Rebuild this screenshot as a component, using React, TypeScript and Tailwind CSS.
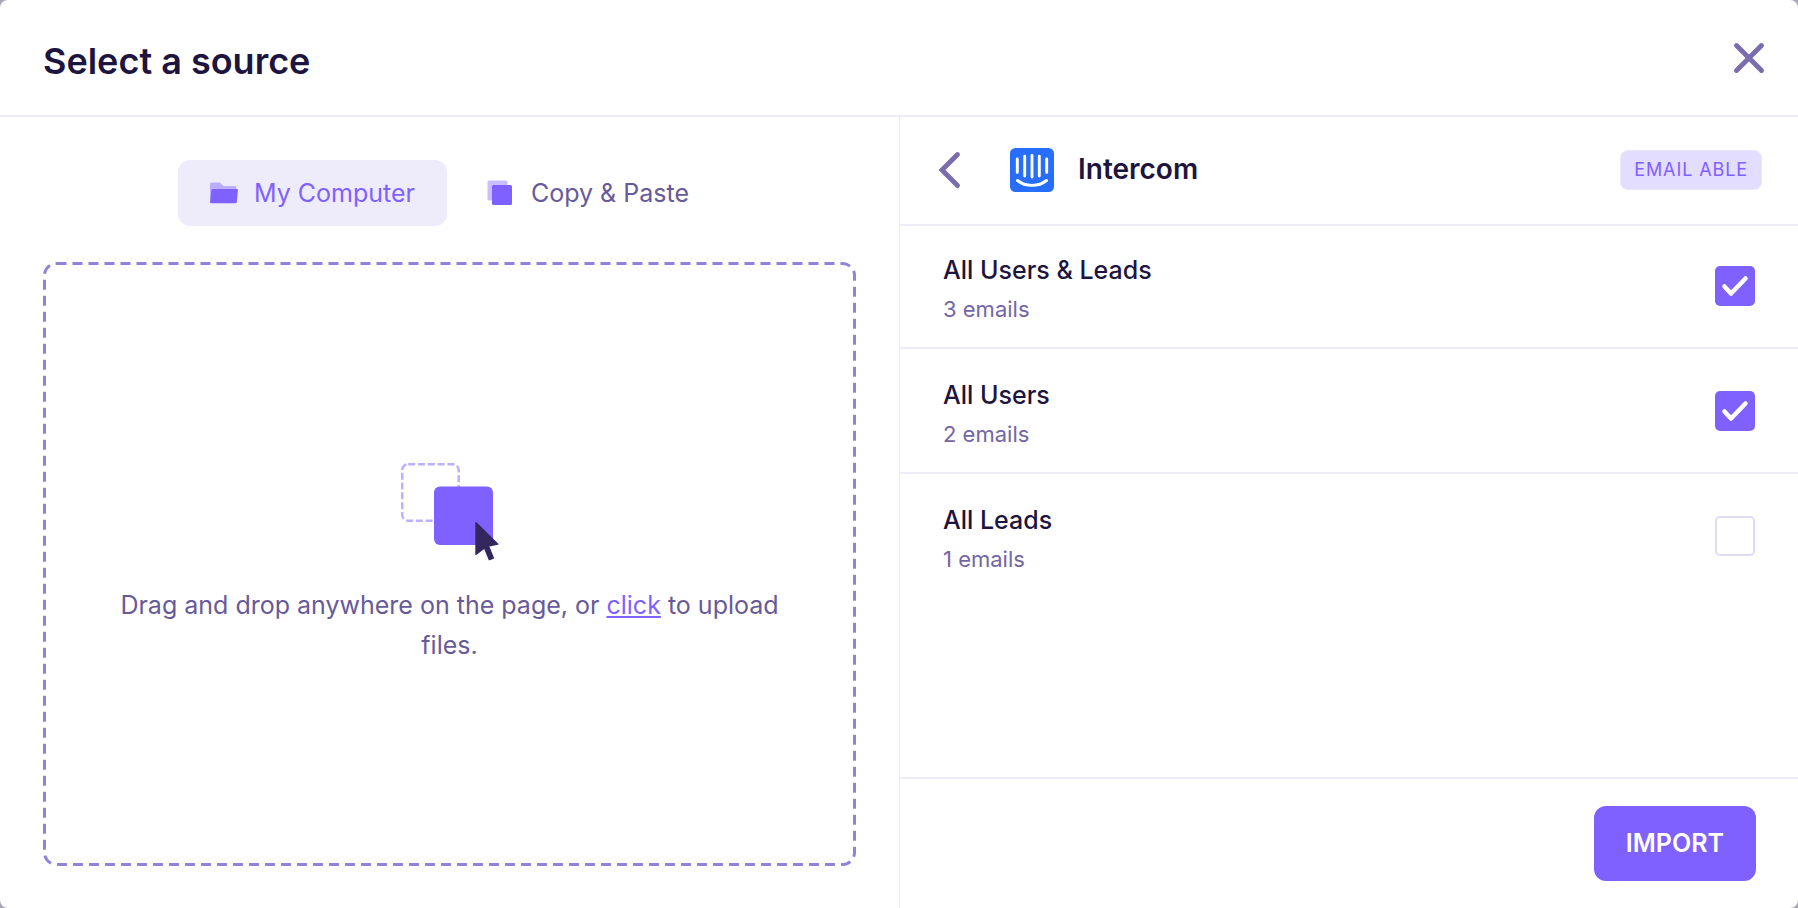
import { useState } from "react";

interface Segment {
    id: string;
    name: string;
    emails: number;
}

const segments: Segment[] = [
    { id: "all", name: "All Users & Leads", emails: 3 },
    { id: "users", name: "All Users", emails: 2 },
    { id: "leads", name: "All Leads", emails: 1 },
];

function FolderIcon() {
    return (
        <svg width="28" height="22" viewBox="0 0 28 22" aria-hidden="true">
            <path d="M0 21V2a1.500 1.500 0 0 1 1.500-1.500H10L13.500 4H25a1.500 1.500 0 0 1 1.500 1.500V10L4 21Z" fill="#bbaeff" />
            <path d="M2.800 7H26.500a1.400 1.400 0 0 1 1.400 1.600L26.800 20a1.500 1.500 0 0 1-1.500 1.300H1.500A1.300 1.300 0 0 1 .2 19.800L1.400 8.200A1.400 1.400 0 0 1 2.800 7Z" fill="#7f61ff" />
        </svg>
    );
}

function CopyIcon() {
    return (
        <svg width="28" height="26" viewBox="0 0 28 26" aria-hidden="true">
            <rect x="0.500" y="0.500" width="20" height="20" rx="1.500" fill="#c9beff" />
            <rect x="5" y="5" width="20" height="20" rx="1.500" fill="#7f61ff" />
        </svg>
    );
}

function DragIllustration() {
    return (
        <svg width="100" height="98" viewBox="0 0 100 98" aria-hidden="true">
            <rect x="2.200" y="1.200" width="56.500" height="56.500" rx="6" fill="none" stroke="#bfb0ff" strokeWidth="2.500" strokeDasharray="7 2.800" />
            <rect x="34" y="23.500" width="59" height="58.500" rx="6" fill="#7f61ff" />
            <path d="M75.300 59.500a.6.6 0 0 1 1-.4L98.300 80.800a.6.6 0 0 1-.3 1L89.400 83.500 94 94.700a.8.8 0 0 1-.4 1L89.700 97.300a.8.8 0 0 1-1-.4L84.200 86 76.300 92a.6.6 0 0 1-1-.5Z" fill="#34265f" />
        </svg>
    );
}

function IntercomLogo() {
    return (
        <svg width="44" height="44" viewBox="0 0 44 44" aria-hidden="true">
            <rect width="44" height="44" rx="5.500" fill="#286efa" />
            <path d="M7.300 11V24.500M14.700 8.200V28M22 7.500V29M29.300 8.200V28M36.700 11V24.500M7.500 32.500C15.500 39 28.500 39 36.500 32.500" fill="none" stroke="#fff" strokeWidth="2.900" strokeLinecap="round" />
        </svg>
    );
}

function DropZone() {
    return (
        <div className="relative mt-9 flex flex-1 flex-col items-center justify-center px-14">
            {/* Dashed outline, drawn by hand for control of the dash length */}
            <svg className="pointer-events-none absolute inset-0 h-full w-full" aria-hidden="true">
                <rect
                    x="1.500"
                    y="1.500"
                    rx="12"
                    className="h-[calc(100%-3px)] w-[calc(100%-3px)]"
                    fill="none"
                    stroke="#9283d8"
                    strokeWidth="3"
                    strokeDasharray="10 6"
                />
            </svg>
            <DragIllustration />
            <p className="mt-6 text-center text-[25px] leading-10 text-[#675a9a]">
                Drag and drop anywhere on the page, or{" "}
                <a href="#upload" className="text-[#7f61ff] underline decoration-2 underline-offset-2">
                    click
                </a>{" "}
                to upload files.
            </p>
        </div>
    );
}

export default function App() {
    const [tab, setTab] = useState("computer");
    const [checked, setChecked] = useState<string[]>(["all", "users"]);

    const toggle = (id: string) => {
        setChecked((prev) => (prev.includes(id) ? prev.filter((x) => x !== id) : [...prev, id]));
    };

    const tabClass = (id: string) =>
        `flex items-center gap-4 rounded-xl px-8 py-3 text-[25px] leading-[42px] ${
            tab === id ? "bg-[#eeecfb] text-[#7f61ff]" : "text-[#675a9a]"
        }`;

    return (
        <div className="min-h-screen bg-[#a9a7b8] font-['Inter',sans-serif]">
            <div className="flex min-h-screen flex-col rounded-lg bg-white">
                <header className="flex items-center justify-between border-b-2 border-[#eeecf9] py-8 pr-8 pl-[43px]">
                    <h1 className="pt-[7px] text-4xl leading-11 font-semibold text-[#1d1540]">Select a source</h1>
                    <button type="button" aria-label="Close">
                        <svg width="34" height="34" viewBox="0 0 34 34" aria-hidden="true">
                            <path d="M4.500 4.500 29.500 29.500M29.500 4.500 4.500 29.500" stroke="#7b6cb0" strokeWidth="4.900" strokeLinecap="round" />
                        </svg>
                    </button>
                </header>

                <main className="grid flex-1 grid-cols-2">
                    <section className="flex flex-col px-[43px] pt-[43px] pb-[42px]">
                        <div className="flex justify-center gap-2">
                            <button type="button" className={tabClass("computer")} onClick={() => setTab("computer")}>
                                <FolderIcon />
                                My Computer
                            </button>
                            <button type="button" className={tabClass("paste")} onClick={() => setTab("paste")}>
                                <CopyIcon />
                                Copy &amp; Paste
                            </button>
                        </div>
                        <DropZone />
                    </section>

                    <section className="flex flex-col border-l border-[#e9e6f8]">
                        <div className="flex items-center border-b-2 border-[#eeecf9] pt-[31px] pr-9 pb-8 pl-[38px]">
                            <button type="button" aria-label="Back">
                                <svg width="24" height="38" viewBox="0 0 24 38" aria-hidden="true">
                                    <path d="M19.500 3.500 4 19 19.500 34.500" fill="none" stroke="#7b6cb0" strokeWidth="4.900" strokeLinecap="round" />
                                </svg>
                            </button>
                            <div className="ml-12">
                                <IntercomLogo />
                            </div>
                            <h2 className="ml-6 pb-0.5 text-[28px] leading-10 font-semibold text-[#1d1540]">Intercom</h2>
                            <span className="ml-auto rounded-lg border border-[#eae6ff] bg-[#e3ddff] px-[13px] text-lg leading-[38px] tracking-wider text-[#7f61ff]">
                                EMAIL ABLE
                            </span>
                        </div>

                        <ul className="-mt-0.5 flex-1">
                            {segments.map((segment) => (
                                <li key={segment.id} className="border-b-2 border-[#eeecf9] last:border-b-0">
                                    <label className="flex items-center justify-between py-[18px] pr-[43px] pl-[43px]">
                                        <span className="flex flex-col pt-2">
                                            <span className="text-[25px] leading-10 font-medium text-[#1d1540]">{segment.name}</span>
                                            <span className="text-[22px] leading-[39px] text-[#7466a5]">{segment.emails} emails</span>
                                        </span>
                                        <span className="grid">
                                            <input
                                                type="checkbox"
                                                checked={checked.includes(segment.id)}
                                                onChange={() => toggle(segment.id)}
                                                className="peer col-start-1 row-start-1 size-10 appearance-none rounded-[5px] border-2 border-[#dedbf2] checked:border-[#7f61ff] checked:bg-[#7f61ff]"
                                            />
                                            <svg className="pointer-events-none invisible col-start-1 row-start-1 peer-checked:visible" width="40" height="40" viewBox="0 0 40 40" aria-hidden="true">
                                                <path d="M9.500 20.500 16 27.500 30.500 12.500" fill="none" stroke="#fff" strokeWidth="4.500" strokeLinecap="round" strokeLinejoin="round" />
                                            </svg>
                                        </span>
                                    </label>
                                </li>
                            ))}
                        </ul>

                        <footer className="flex justify-end border-t-2 border-[#eeecf9] py-[27px] pr-[42px]">
                            <button type="button" className="rounded-xl bg-[#7f61ff] px-8 py-4 text-[25px] leading-[43px] font-semibold text-white">
                                IMPORT
                            </button>
                        </footer>
                    </section>
                </main>
            </div>
        </div>
    );
}
